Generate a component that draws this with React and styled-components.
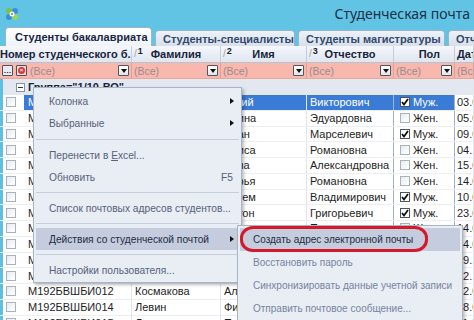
import React from 'react'
import styled, { createGlobalStyle } from 'styled-components'

const GlobalStyle = createGlobalStyle`
  html, body { margin: 0; padding: 0; }
  body {
    width: 474px;
    height: 320px;
    overflow: hidden;
    font-family: 'Liberation Sans', Arial, sans-serif;
  }
`

const COLS = '132px 89px 86px 87px 61px 1fr'

const rows = [
  { num: 'М192БВШБИ001', last: 'Абрамов', first: 'Юрий', mid: 'Викторович', male: true, date: '03.09.1994', sel: true },
  { num: 'М192БВШБИ002', last: 'Базарова', first: 'Алина', mid: 'Эдуардовна', male: false, date: '05.03.1995' },
  { num: 'М192БВШБИ003', last: 'Валиев', first: 'Иван', mid: 'Марселевич', male: true, date: '09.01.1995' },
  { num: 'М192БВШБИ004', last: 'Гусева', first: 'Алиса', mid: 'Романовна', male: false, date: '04.11.1994' },
  { num: 'М192БВШБИ005', last: 'Демина', first: 'Анна', mid: 'Александровна', male: false, date: '15.07.1995' },
  { num: 'М192БВШБИ006', last: 'Егорова', first: 'Дарья', mid: 'Романовна', male: false, date: '14.02.1995' },
  { num: 'М192БВШБИ007', last: 'Жуков', first: 'Артем', mid: 'Владимирович', male: true, date: '10.06.1994' },
  { num: 'М192БВШБИ008', last: 'Зайцев', first: 'Антон', mid: 'Григорьевич', male: true, date: '23.08.1995' },
  { num: 'М192БВШБИ009', last: 'Ильина', first: 'Ольга', mid: 'Петровна', male: false, date: '14.05.1995' },
  { num: 'М192БВШБИ010', last: 'Карпов', first: 'Олег', mid: 'Сергеевич', male: true, date: '14.04.1994' },
  { num: 'М192БВШБИ011', last: 'Климова', first: 'Вера', mid: 'Ивановна', male: false, date: '19.12.1994' },
  { num: 'М192БВШБИ013', last: 'Козлов', first: 'Денис', mid: 'Андреевич', male: true, date: '12.10.1995' },
  { num: 'М192БВШБИ012', last: 'Космакова', first: 'Алена', mid: 'Игоревна', male: false, date: '12.03.1995' },
  { num: 'М192БВШБИ014', last: 'Левин', first: 'Филипп', mid: 'Олегович', male: true, date: '18.01.1995' },
  { num: 'М192БВШБИ015', last: 'Лукин', first: 'Павел', mid: 'Юрьевич', male: true, date: '11.09.1994' },
]

const Window = styled.div`
  position: relative;
  width: 474px;
  height: 320px;
  overflow: hidden;
  background: #62c4e5;
  display: flex;
  flex-direction: column;
`

const TitleBar = styled.div`
  height: 27px;
  flex: none;
  display: flex;
  align-items: center;
  justify-content: space-between;
  padding: 0 4px 0 5px;
`

const Title = styled.div`
  font-family: 'Noto Sans', 'Open Sans', sans-serif;
  font-size: 14px;
  color: #1b3149;
`

const TabStrip = styled.div`
  height: 19px;
  flex: none;
  display: flex;
  align-items: flex-end;
  gap: 3px;
  padding-left: 5px;
`

const Tab = styled.div`
  flex: none;
  width: ${(p) => p.$w}px;
  height: ${(p) => (p.$active ? 19 : 16)}px;
  box-sizing: border-box;
  display: flex;
  align-items: center;
  padding-left: ${(p) => (p.$active ? 9 : 7)}px;
  border: 1px solid #9cb2ca;
  border-bottom: none;
  border-radius: 4px 4px 0 0;
  background: ${(p) =>
    p.$active ? 'linear-gradient(#ffffff, #eef3fa)' : 'linear-gradient(#edf2f8, #d6e0ec)'};
  font-size: 11px;
  font-weight: bold;
  color: ${(p) => (p.$active ? '#1a2742' : '#34486a')};
  white-space: nowrap;
  overflow: hidden;
`

const Grid = styled.div`
  flex: 1;
  background: #ffffff;
  display: flex;
  flex-direction: column;
  overflow: hidden;
`

const HeaderRow = styled.div`
  flex: none;
  display: grid;
  grid-template-columns: ${COLS};
  height: 17px;
  box-sizing: border-box;
  background: linear-gradient(#f5f7fb, #dfe6ef);
  border-bottom: 1px solid #b7c3d3;
`

const HeaderCell = styled.div`
  position: relative;
  display: flex;
  align-items: center;
  justify-content: ${(p) => p.$justify || 'center'};
  padding-left: ${(p) => p.$pl || 0}px;
  padding-right: ${(p) => p.$pr || 0}px;
  border-right: 1px solid #c3cddb;
  font-size: 11px;
  font-weight: bold;
  color: #18243c;
  white-space: nowrap;
  overflow: hidden;
`

const SortMark = styled.span`
  position: absolute;
  left: 2px;
  top: 0;
  font-size: 9px;
  line-height: 10px;
  color: #222;
  font-weight: bold;
  &::before {
    content: '/';
    color: #9aa3b0;
    font-weight: normal;
    font-size: 10px;
    margin-right: 1px;
    position: relative;
    top: 3px;
  }
`

const FilterRow = styled.div`
  flex: none;
  display: grid;
  grid-template-columns: ${COLS};
  height: 16px;
  box-sizing: border-box;
  background: #f8b8ad;
  border-bottom: 1px solid #e3a79d;
`

const FilterCell = styled.div`
  display: flex;
  align-items: center;
  gap: 3px;
  padding: 0 2px 0 2px;
  border-right: 1px solid #dda298;
  overflow: hidden;
`

const AllText = styled.span`
  flex: 1;
  font-size: 10.5px;
  color: #9c8a90;
  white-space: nowrap;
`

const DropBtn = styled.span`
  flex: none;
  width: 11px;
  height: 11px;
  box-sizing: border-box;
  border: 1px solid #505660;
  border-radius: 1px;
  background: linear-gradient(#ffffff, #e2e6ec);
  display: flex;
  align-items: center;
  justify-content: center;
  &::after {
    content: '';
    border-top: 4px solid #111;
    border-left: 3.5px solid transparent;
    border-right: 3.5px solid transparent;
  }
`

const ToolBtn = styled.span`
  flex: none;
  width: 11px;
  height: 11px;
  box-sizing: border-box;
  border: 1px solid #4b5260;
  border-radius: 1px;
  background: ${(p) => (p.$red ? '#f6d6d6' : '#e8ecf2')};
  display: flex;
  align-items: center;
  justify-content: center;
  font-size: 8px;
  line-height: 8px;
  font-weight: bold;
  color: #222;
`

const RedDot = styled.span`
  width: 7px;
  height: 7px;
  border-radius: 50%;
  background: #d83a3a;
  color: #fff;
  font-size: 6px;
  line-height: 7px;
  text-align: center;
`

const GroupRow = styled.div`
  flex: none;
  height: 16px;
  display: flex;
  align-items: center;
  gap: 3px;
  padding-left: 16px;
  background: #e3e8f0;
  font-size: 11px;
  font-weight: bold;
  color: #1b2435;
  box-shadow: inset 3px 0 0 #5dbfe2;
`

const Expander = styled.span`
  width: 9px;
  height: 9px;
  box-sizing: border-box;
  border: 1px solid #8993a6;
  background: #fff;
  display: flex;
  align-items: center;
  justify-content: center;
  &::after {
    content: '';
    width: 5px;
    height: 1px;
    background: #333;
  }
`

const DataRow = styled.div`
  flex: none;
  display: grid;
  grid-template-columns: ${COLS};
  height: 15.75px;
  box-sizing: border-box;
  border-bottom: 1px solid #eceef3;
  font-size: 11px;
`

const Cell = styled.div`
  display: flex;
  align-items: center;
  padding-left: ${(p) => p.$pl ?? 3}px;
  gap: 3px;
  border-right: 1px solid ${(p) => (p.$dark ? '#9fb0c8' : '#e1e5ec')};
  background: ${(p) => (p.$sel ? '#3a7bd6' : 'transparent')};
  color: ${(p) => (p.$sel ? '#ffffff' : '#1e1e1e')};
  white-space: nowrap;
  overflow: hidden;
`

const FirstCell = styled.div`
  display: flex;
  border-right: 1px solid #e1e5ec;
  overflow: hidden;
`

const CheckSlot = styled.div`
  flex: none;
  width: 24px;
  display: flex;
  align-items: center;
  padding-left: 6px;
  box-sizing: border-box;
  box-shadow: inset 3px 0 0 #5dbfe2;
`

const Box = styled.span`
  flex: none;
  width: 10px;
  height: 10px;
  box-sizing: border-box;
  border: 1px solid ${(p) => (p.$on ? '#4c5566' : '#a9b1bd')};
  background: ${(p) => (p.$on ? '#ffffff' : 'linear-gradient(135deg, #e9ecf0, #ffffff)')};
  display: flex;
  align-items: center;
  justify-content: center;
`

const NumText = styled.div`
  flex: 1;
  display: flex;
  align-items: center;
  padding-left: 4px;
  background: ${(p) => (p.$sel ? '#3a7bd6' : 'transparent')};
  color: ${(p) => (p.$sel ? '#ffffff' : '#1e1e1e')};
  white-space: nowrap;
`

const Menu = styled.div`
  position: absolute;
  left: 33px;
  top: 87px;
  width: 209px;
  height: 196px;
  box-sizing: border-box;
  padding: 2px 2px 3px;
  background: #e9edf4;
  border: 1px solid #a8b4c8;
  box-shadow: 2px 2px 3px rgba(0, 0, 0, 0.25);
  display: flex;
  flex-direction: column;
`

const SubMenu = styled(Menu)`
  left: 237px;
  top: 225px;
  width: 226px;
  height: 100px;
`

const Item = styled.div`
  flex: none;
  height: ${(p) => p.$h || 22}px;
  display: flex;
  align-items: center;
  padding: 0 4px 0 13px;
  font-size: ${(p) => p.$size || 10.2}px;
  color: ${(p) => (p.$active ? '#222c42' : p.$dim ? '#7684a0' : '#56627a')};
  background: ${(p) => (p.$active ? '#c4ccde' : 'transparent')};
  white-space: nowrap;
`

const Shortcut = styled.span`
  margin-left: auto;
  padding-right: 2px;
`

const Arrow = styled.span`
  margin-left: auto;
  margin-right: 1px;
  border-left: 4px solid #111;
  border-top: 3.5px solid transparent;
  border-bottom: 3.5px solid transparent;
`

const Sep = styled.div`
  flex: none;
  height: ${(p) => p.$h || 9}px;
  display: flex;
  align-items: center;
  &::after {
    content: '';
    flex: 1;
    height: 1px;
    background: #c7cedb;
  }
`

const Circle = styled.div`
  position: absolute;
  left: 240px;
  top: 226px;
  width: 188px;
  height: 26px;
  box-sizing: border-box;
  border: 3px solid #d4192b;
  border-radius: 13px / 12px;
`

const Logo = () => (
  <svg width="14" height="14" viewBox="0 0 14 14">
    <circle cx="4" cy="4" r="3" fill="#7cc242" />
    <circle cx="10" cy="4" r="3" fill="#3a8fd8" />
    <circle cx="4" cy="10" r="3" fill="#3a8fd8" />
    <circle cx="10" cy="10" r="3" fill="#9ad65a" />
    <circle cx="7" cy="7" r="2.5" fill="#f4f8fb" />
    <circle cx="7" cy="7" r="1" fill="#6a7a8a" />
  </svg>
)

const Tick = () => (
  <svg width="8" height="8" viewBox="0 0 8 8">
    <path d="M1 4 L3 6.5 L7 1" stroke="#111" strokeWidth="1.8" fill="none" />
  </svg>
)

const App = () => {
  return (
    <>
      <GlobalStyle />
      <Window>
        <TitleBar>
          <Logo />
          <Title>Студенческая почта</Title>
        </TitleBar>
        <TabStrip>
          <Tab $active $w={147}>Студенты бакалавриата</Tab>
          <Tab $w={140}>Студенты-специалисты</Tab>
          <Tab $w={147}>Студенты магистратуры</Tab>
          <Tab $w={40}>Отчеты</Tab>
        </TabStrip>
        <Grid>
          <HeaderRow>
            <HeaderCell $justify="flex-start">Номер студенческого б...</HeaderCell>
            <HeaderCell>
              <SortMark>1</SortMark>Фамилия
            </HeaderCell>
            <HeaderCell>
              <SortMark>2</SortMark>Имя
            </HeaderCell>
            <HeaderCell>
              <SortMark>3</SortMark>Отчество
            </HeaderCell>
            <HeaderCell $justify="flex-end" $pr={14}>Пол</HeaderCell>
            <HeaderCell $justify="flex-start" $pl={2}>Дата рождения</HeaderCell>
          </HeaderRow>
          <FilterRow>
            <FilterCell>
              <ToolBtn>…</ToolBtn>
              <ToolBtn $red>
                <RedDot>×</RedDot>
              </ToolBtn>
              <AllText>(Все)</AllText>
              <DropBtn />
            </FilterCell>
            {[0, 1, 2, 3].map((i) => (
              <FilterCell key={i}>
                <AllText>(Все)</AllText>
                <DropBtn />
              </FilterCell>
            ))}
            <FilterCell>
              <AllText>(Все)</AllText>
            </FilterCell>
          </FilterRow>
          <GroupRow>
            <Expander />
            Группа="1/10-ВО"
          </GroupRow>
          {rows.map((r) => (
            <DataRow key={r.num}>
              <FirstCell>
                <CheckSlot>
                  <Box />
                </CheckSlot>
                <NumText $sel={r.sel}>{r.num}</NumText>
              </FirstCell>
              <Cell $sel={r.sel}>{r.last}</Cell>
              <Cell $sel={r.sel}>{r.first}</Cell>
              <Cell $sel={r.sel} $dark>{r.mid}</Cell>
              <Cell $sel={r.sel} $pl={6} $dark>
                <Box $on={r.male}>{r.male && <Tick />}</Box>
                {r.male ? 'Муж.' : 'Жен.'}
              </Cell>
              <Cell $pl={2}>{r.date}</Cell>
            </DataRow>
          ))}
        </Grid>

        <Menu>
          <Item>
            Колонка<Arrow />
          </Item>
          <Item>
            Выбранные<Arrow />
          </Item>
          <Sep $h={10} />
          <Item>
            <span>
              Перенести в <u>E</u>xcel...
            </span>
          </Item>
          <Item>
            Обновить<Shortcut>F5</Shortcut>
          </Item>
          <Sep />
          <Item>Список почтовых адресов студентов...</Item>
          <Sep />
          <Item $active>
            Действия со студенческой почтой<Arrow />
          </Item>
          <Sep />
          <Item>Настройки пользователя...</Item>
        </Menu>

        <SubMenu>
          <Item $active $h={23} $size={10}>Создать адрес электронной почты</Item>
          <Item $dim $h={23} $size={10}>Восстановить пароль</Item>
          <Item $dim $h={23} $size={10}>Синхронизировать данные учетной записи</Item>
          <Item $dim $h={23} $size={10}>Отправить почтовое сообщение...</Item>
        </SubMenu>
        <Circle />
      </Window>
    </>
  )
}

export default App
